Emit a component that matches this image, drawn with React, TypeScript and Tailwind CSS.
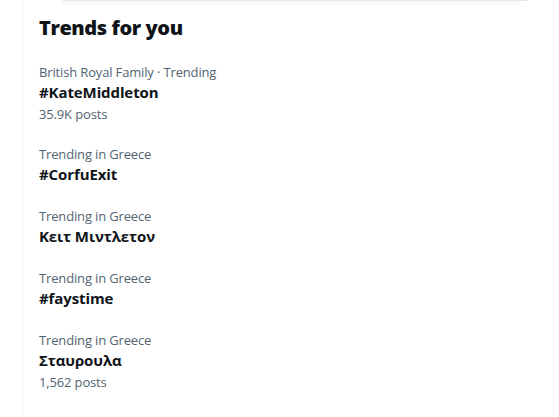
import React from "react";

type Trend = { cat: string; name: string; posts?: string };

const trends: Trend[] = [
  { cat: "British Royal Family · Trending", name: "#KateMiddleton", posts: "35.9K posts" },
  { cat: "Trending in Greece", name: "#CorfuExit" },
  { cat: "Trending in Greece", name: "Κειτ Μιντλετον" },
  { cat: "Trending in Greece", name: "#faystime" },
  { cat: "Trending in Greece", name: "Σταυρουλα", posts: "1,562 posts" },
];

export default function App() {
  return (
    <div
      className="relative w-[559px] h-[417px] bg-white overflow-hidden"
      style={{ fontFamily: '"Open Sans", "Noto Sans", sans-serif' }}
    >
      <div className="absolute left-[62px] top-0 w-[466px] h-[1px] bg-[#e7e9ea]" />
      <div className="absolute left-[62px] top-[1px] w-[458px] h-[5px] bg-[#fbfbfb]" />
      <div className="ml-[22px] h-full border-l border-[#eff3f4] pt-[4px]">
        <div className="px-4 py-3">
          <h2 className="text-[20px] leading-[24px] font-extrabold tracking-[-0.4px] text-[#0f1419]">
            Trends for you
          </h2>
        </div>
        {trends.map((t, i) => (
          <div key={i} className="px-4 py-3">
            <div className="text-[13px] leading-[16px] tracking-[-0.15px] text-[#536471]">{t.cat}</div>
            <div className="mt-[2px] text-[15px] leading-[20px] font-bold tracking-[-0.1px] text-[#0f1419]">
              {t.name}
            </div>
            {t.posts && (
              <div className="mt-1 text-[13px] leading-[16px] tracking-[-0.15px] text-[#536471]">{t.posts}</div>
            )}
          </div>
        ))}
      </div>
    </div>
  );
}
